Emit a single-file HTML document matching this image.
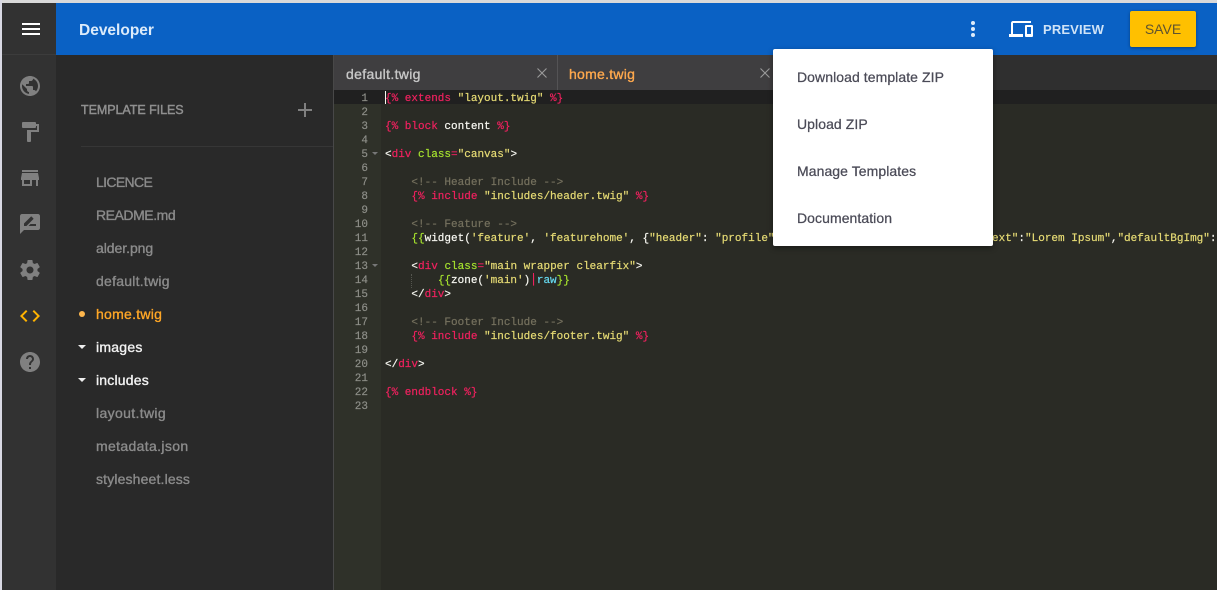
<!DOCTYPE html>
<html><head><meta charset="utf-8"><title>Developer</title>
<style>
*{box-sizing:border-box}
html,body{margin:0;padding:0;width:1217px;height:590px;overflow:hidden;background:#292929;font-family:"Liberation Sans",sans-serif}
.a{position:absolute}
.t{position:absolute;white-space:pre;font-size:14px;line-height:20px;-webkit-text-stroke:.35px currentColor}
.f{left:96px;color:#8b8b8b}
.ic{position:absolute;left:18px;width:24px;height:24px;fill:#808080}
.m{position:absolute;left:385px;margin-top:2px;white-space:pre;font:11px/14px "Liberation Mono",monospace;color:#f8f8f2;-webkit-text-stroke:.2px currentColor}
.n{position:absolute;left:334px;margin-top:2px;width:34px;text-align:right;font:11px/14px "Liberation Mono",monospace;color:#8f908a;-webkit-text-stroke:.15px currentColor}
.p{color:#f0215f}.y{color:#e6db74}.g{color:#a6e22e}.c{color:#75715e}.b{color:#66d9ef}
.mi{position:absolute;left:797px;color:#4b4b57;font-size:14px;letter-spacing:.07px;-webkit-text-stroke:.25px currentColor}
</style></head><body>
<div class="a" style="left:0;top:0;width:1217px;height:3px;background:#d9d9d9"></div>
<div class="a" style="left:0;top:0;width:2px;height:590px;background:#d9d9e4"></div>
<div class="a" style="left:2px;top:3px;width:54px;height:587px;background:#323232"></div>
<div class="a" style="left:2px;top:54px;width:54px;height:1px;background:#3c3c3c"></div>
<div class="a" style="left:56px;top:3px;width:1161px;height:52px;background:#0a61c4"></div>

<div class="a" style="left:22px;top:23px;width:18px;height:2px;background:#fff"></div>
<div class="a" style="left:22px;top:28px;width:18px;height:2px;background:#fff"></div>
<div class="a" style="left:22px;top:33px;width:18px;height:2px;background:#fff"></div>
<div class="t" style="left:79px;top:21px;color:#dcebfa;font-size:15.5px;font-weight:bold;-webkit-text-stroke:0">Developer</div>

<svg class="a" style="left:961px;top:17px;fill:#dcebfa" width="24" height="24" viewBox="0 0 24 24"><circle cx="12" cy="6" r="2"/><circle cx="12" cy="12" r="2"/><circle cx="12" cy="18" r="2"/></svg>
<svg class="a" style="left:1009px;top:17px;fill:#fff" width="24" height="24" viewBox="0 0 24 24"><path d="M4 6h18V4H4c-1.100 0-2 .9-2 2v11H0v3h14v-3H4V6zm19 2h-6c-.55 0-1 .45-1 1v10c0 .55.45 1 1 1h6c.55 0 1-.45 1-1V9c0-.55-.45-1-1-1zm-1 9h-4v-7h4v7z"/></svg>
<div class="t" style="left:1043px;top:20px;color:#cfe3f7;font-size:13px;font-weight:bold;letter-spacing:.15px;-webkit-text-stroke:0">PREVIEW</div>
<div class="a" style="left:1130px;top:11px;width:66px;height:36px;background:#ffc000;border-radius:2px;box-shadow:0 1px 3px rgba(0,0,0,.35);color:#5f5330;font-size:14px;line-height:37px;text-align:center">SAVE</div>

<svg class="ic" style="top:74px" viewBox="0 0 24 24"><path d="M12 2C6.480 2 2 6.480 2 12s4.480 10 10 10 10-4.480 10-10S17.520 2 12 2zm-1 17.930c-3.950-.49-7-3.850-7-7.930 0-.62.08-1.210.21-1.790L9 15v1c0 1.100.9 2 2 2v1.930zm6.900-2.540c-.26-.81-1-1.390-1.900-1.390h-1v-3c0-.55-.45-1-1-1H8v-2h2c.55 0 1-.45 1-1V7h2c1.100 0 2-.9 2-2v-.41c2.930 1.190 5 4.060 5 7.410 0 2.080-.8 3.970-2.100 5.390z"/></svg>
<svg class="ic" style="top:120px" viewBox="0 0 24 24"><path d="M18 4V3c0-.55-.45-1-1-1H5c-.55 0-1 .45-1 1v4c0 .55.45 1 1 1h12c.55 0 1-.45 1-1V6h1v4H9v11c0 .55.45 1 1 1h2c.55 0 1-.45 1-1v-9h8V4h-3z"/></svg>
<svg class="ic" style="top:166px" viewBox="0 0 24 24"><path d="M20 4H4v2h16V4zm1 10v-2l-1-5H4l-1 5v2h1v6h10v-6h4v6h2v-6h1zm-9 4H6v-4h6v4z"/></svg>
<svg class="ic" style="top:212px" viewBox="0 0 24 24"><path d="M20 2H4c-1.100 0-1.990.9-1.990 2L2 22l4-4h14c1.100 0 2-.9 2-2V4c0-1.100-.9-2-2-2zM6 14v-2.470l6.880-6.880c.2-.2.51-.2.71 0l1.770 1.770c.2.2.2.51 0 .71L8.470 14H6zm12 0h-7.500l2-2H18v2z"/></svg>
<svg class="ic" style="top:258px" viewBox="0 0 24 24"><path d="M19.430 12.980c.04-.32.07-.64.07-.98s-.03-.66-.07-.98l2.110-1.650c.19-.15.24-.42.12-.64l-2-3.460c-.12-.22-.39-.3-.61-.22l-2.490 1c-.52-.4-1.080-.73-1.690-.98l-.38-2.650C14.460 2.180 14.250 2 14 2h-4c-.25 0-.46.18-.49.42l-.38 2.650c-.61.25-1.170.59-1.690.98l-2.490-1c-.23-.09-.49 0-.61.22l-2 3.460c-.13.22-.07.49.12.64l2.110 1.650c-.04.32-.07.65-.07.98s.03.66.07.98l-2.110 1.650c-.19.15-.24.42-.12.64l2 3.460c.12.22.39.3.61.22l2.490-1c.52.4 1.080.73 1.690.98l.38 2.650c.03.24.24.42.49.42h4c.25 0 .46-.18.49-.42l.38-2.650c.61-.25 1.170-.59 1.690-.98l2.490 1c.23.09.49 0 .61-.22l2-3.460c.12-.22.07-.49-.12-.64l-2.110-1.650zM12 15.500c-1.930 0-3.500-1.570-3.500-3.500s1.570-3.500 3.500-3.500 3.500 1.570 3.500 3.500-1.570 3.500-3.500 3.500z"/></svg>
<svg class="ic" style="top:304px;fill:#ffb300" viewBox="0 0 24 24"><path d="M9.400 16.600L4.800 12l4.600-4.600L8 6l-6 6 6 6 1.400-1.400zm5.200 0l4.600-4.600-4.600-4.600L16 6l6 6-6 6-1.400-1.400z"/></svg>
<svg class="ic" style="top:350px" viewBox="0 0 24 24"><path d="M12 2C6.480 2 2 6.480 2 12s4.480 10 10 10 10-4.480 10-10S17.520 2 12 2zm1 17h-2v-2h2v2zm2.070-7.750l-.9.92C13.450 12.900 13 13.500 13 15h-2v-.5c0-1.100.45-2.100 1.170-2.830l1.240-1.260c.37-.36.59-.86.59-1.410 0-1.100-.9-2-2-2s-2 .9-2 2H8c0-2.210 1.790-4 4-4s4 1.790 4 4c0 .88-.36 1.680-.93 2.250z"/></svg>

<div class="t" style="left:81px;top:100px;color:#8f8f8f;font-size:12.5px;letter-spacing:-.05px;-webkit-text-stroke:.45px currentColor">TEMPLATE FILES</div>
<div class="a" style="left:298px;top:109px;width:14px;height:2px;background:#808080"></div>
<div class="a" style="left:304px;top:103px;width:2px;height:14px;background:#808080"></div>
<div class="a" style="left:81px;top:146px;width:252px;height:1px;background:#363636"></div>

<div class="t f" style="top:172px;letter-spacing:-.65px">LICENCE</div>
<div class="t f" style="top:205px;letter-spacing:-.45px">README.md</div>
<div class="t f" style="top:238px;letter-spacing:-.05px">alder.png</div>
<div class="t f" style="top:271px;letter-spacing:.25px">default.twig</div>
<div class="a" style="left:79px;top:311px;width:6px;height:6px;border-radius:50%;background:#ffb74d"></div>
<div class="t f" style="top:304px;color:#ffa726;letter-spacing:.27px">home.twig</div>
<div class="a" style="left:78px;top:345px;border:4px solid transparent;border-top:4px solid #eee;border-bottom:0"></div>
<div class="t f" style="top:337px;color:#f2f2f2;letter-spacing:.25px">images</div>
<div class="a" style="left:78px;top:378px;border:4px solid transparent;border-top:4px solid #eee;border-bottom:0"></div>
<div class="t f" style="top:370px;color:#f2f2f2;letter-spacing:.2px">includes</div>
<div class="t f" style="top:403px;letter-spacing:.35px">layout.twig</div>
<div class="t f" style="top:436px;letter-spacing:.35px">metadata.json</div>
<div class="t f" style="top:469px;letter-spacing:.15px">stylesheet.less</div>

<div class="a" style="left:333px;top:55px;width:1px;height:535px;background:#484848"></div>
<div class="a" style="left:334px;top:55px;width:883px;height:35px;background:#2f2f2f"></div>
<div class="a" style="left:334px;top:55px;width:446px;height:35px;background:#3f3e40"></div>
<div class="a" style="left:557px;top:55px;width:1px;height:35px;background:#545355"></div>
<div class="t" style="left:346px;top:64px;color:#c8c8c8;letter-spacing:.33px">default.twig</div>
<div class="t" style="left:569px;top:64px;color:#ffa94d;letter-spacing:.27px">home.twig</div>
<svg class="a" style="left:537px;top:68px" width="10" height="10" viewBox="0 0 10 10"><path d="M.5.500l9 9M9.500.500l-9 9" stroke="#9a9a9a" stroke-width="1.100" fill="none"/></svg>
<svg class="a" style="left:760px;top:68px" width="10" height="10" viewBox="0 0 10 10"><path d="M.5.500l9 9M9.500.500l-9 9" stroke="#9a9a9a" stroke-width="1.100" fill="none"/></svg>

<div class="a" style="left:334px;top:90px;width:47px;height:500px;background:#2f3129"></div>
<div class="a" style="left:381px;top:90px;width:836px;height:500px;background:#2a2b25"></div>
<div class="a" style="left:334px;top:90px;width:883px;height:14px;background:#202020"></div>
<div class="a" style="left:385px;top:91px;width:1px;height:13px;background:#f8f8f0"></div>
<div class="a" style="left:411px;top:274px;width:1px;height:14px;border-left:1px dotted #55564f"></div>

<div class="n" style="top:90px">1</div><div class="n" style="top:104px">2</div><div class="n" style="top:118px">3</div><div class="n" style="top:132px">4</div><div class="n" style="top:146px">5</div><div class="n" style="top:160px">6</div><div class="n" style="top:174px">7</div><div class="n" style="top:188px">8</div><div class="n" style="top:202px">9</div><div class="n" style="top:216px">10</div><div class="n" style="top:230px">11</div><div class="n" style="top:244px">12</div><div class="n" style="top:258px">13</div><div class="n" style="top:272px">14</div><div class="n" style="top:286px">15</div><div class="n" style="top:300px">16</div><div class="n" style="top:314px">17</div><div class="n" style="top:328px">18</div><div class="n" style="top:342px">19</div><div class="n" style="top:356px">20</div><div class="n" style="top:370px">21</div><div class="n" style="top:384px">22</div><div class="n" style="top:398px">23</div>
<div class="a" style="left:372px;top:152px;border:3px solid transparent;border-top:3px solid #777;border-bottom:0"></div>
<div class="a" style="left:372px;top:264px;border:3px solid transparent;border-top:3px solid #777;border-bottom:0"></div>

<div class="m" style="top:90px"><span class="p">{% extends </span><span class="y">"layout.twig"</span><span class="p"> %}</span></div>
<div class="m" style="top:118px"><span class="p">{% block </span>content<span class="p"> %}</span></div>
<div class="m" style="top:146px">&lt;<span class="p">div</span> <span class="g">class</span><span class="p">=</span><span class="y">"canvas"</span>&gt;</div>
<div class="m c" style="top:174px">    &lt;!-- Header Include --&gt;</div>
<div class="m" style="top:188px">    <span class="p">{% include </span><span class="y">"includes/header.twig"</span><span class="p"> %}</span></div>
<div class="m c" style="top:216px">    &lt;!-- Feature --&gt;</div>
<div class="m" style="top:230px">    <span class="g">{{</span>widget(<span class="y">'feature'</span>, <span class="y">'featurehome'</span>, {<span class="y">"header"</span>: <span class="y">"profile"</span></div>
<div class="m" style="top:230px;left:992px"><span class="y">ext"</span>:<span class="y">"Lorem Ipsum"</span>,<span class="y">"defaultBgImg"</span>:</div>
<div class="m" style="top:258px">    &lt;<span class="p">div</span> <span class="g">class</span><span class="p">=</span><span class="y">"main wrapper clearfix"</span>&gt;</div>
<div class="m" style="top:272px">        <span class="g">{{</span>zone(<span class="y">'main'</span>)<span class="p">|</span><span class="b">raw</span><span class="g">}}</span></div>
<div class="a" style="left:533px;top:273px;width:1px;height:12px;background:#f0215f"></div>
<div class="m" style="top:286px">    &lt;/<span class="p">div</span>&gt;</div>
<div class="m c" style="top:314px">    &lt;!-- Footer Include --&gt;</div>
<div class="m" style="top:328px">    <span class="p">{% include </span><span class="y">"includes/footer.twig"</span><span class="p"> %}</span></div>
<div class="m" style="top:356px">&lt;/<span class="p">div</span>&gt;</div>
<div class="m" style="top:384px"><span class="p">{% endblock %}</span></div>

<div class="a" style="left:773px;top:49px;width:220px;height:197px;background:#fff;border-radius:2px;box-shadow:0 2px 6px rgba(0,0,0,.4)"></div>
<div class="t mi" style="top:67px">Download template ZIP</div>
<div class="t mi" style="top:114px">Upload ZIP</div>
<div class="t mi" style="top:161px">Manage Templates</div>
<div class="t mi" style="top:208px">Documentation</div>
</body></html>
